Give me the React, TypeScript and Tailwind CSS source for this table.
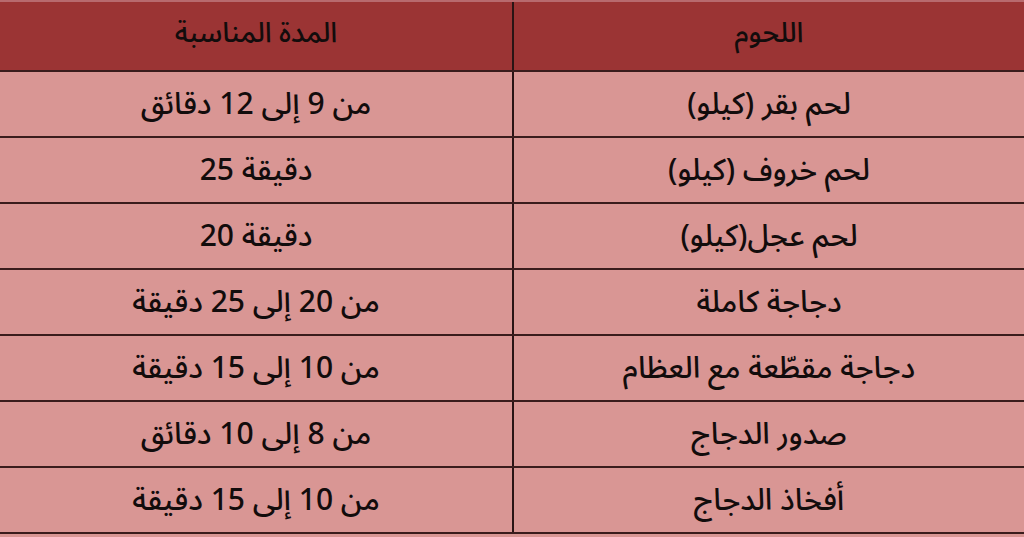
const ROWS = [
  { meat: "لحم بقر (كيلو)", time: "من 9 إلى 12 دقائق" },
  { meat: "لحم خروف (كيلو)", time: "دقيقة 25" },
  { meat: "لحم عجل(كيلو)", time: "دقيقة 20" },
  { meat: "دجاجة كاملة", time: "من 20 إلى 25 دقيقة" },
  { meat: "دجاجة مقطّعة مع العظام", time: "من 10 إلى 15 دقيقة" },
  { meat: "صدور الدجاج", time: "من 8 إلى 10 دقائق" },
  { meat: "أفخاذ الدجاج", time: "من 10 إلى 15 دقيقة" },
];

export default function App() {
  return (
    <div
      dir="rtl"
      className="h-[537px] w-[1024px] overflow-hidden bg-[#d99694] text-[#120c0c]"
      style={{ fontFamily: '"Noto Sans Arabic", "DejaVu Sans", sans-serif' }}
    >
      <div className="grid grid-cols-2 border-t-2 border-[#b86a6e] bg-[#9b3434]">
        <div className="flex h-[68px] items-center justify-center border-l-2 border-[#2a1414] pb-1 text-[28px] font-medium">
          اللحوم
        </div>
        <div className="flex h-[68px] items-center justify-center pb-1 text-[28px] font-medium">
          المدة المناسبة
        </div>
      </div>
      {ROWS.map((row) => (
        <div
          key={row.meat}
          className="grid grid-cols-2 border-t-2 border-[#3a1c1c]"
        >
          <div className="flex h-[64px] items-center justify-center border-l-2 border-[#2a1414] text-[30px] font-medium">
            {row.meat}
          </div>
          <div className="flex h-[64px] items-center justify-center text-[30px] font-medium">
            {row.time}
          </div>
        </div>
      ))}
      <div className="border-t-2 border-[#3a1c1c]" />
    </div>
  );
}
